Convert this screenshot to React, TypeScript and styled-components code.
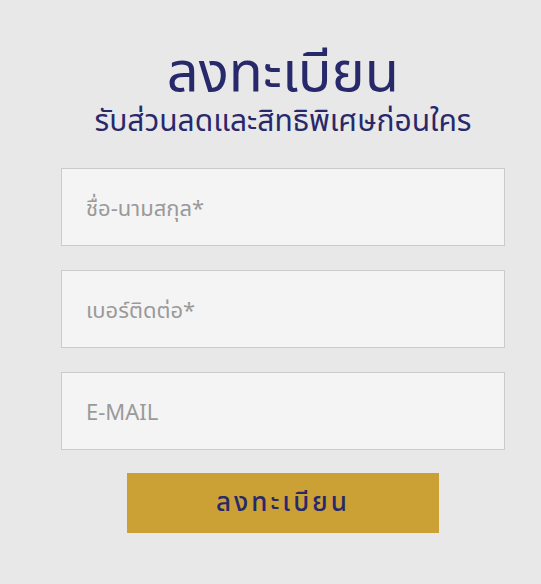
import { ReactElement } from 'react';
import styled, { createGlobalStyle } from 'styled-components';

const GlobalStyle = createGlobalStyle`
  html, body {
    margin: 0;
    padding: 0;
    background: #e8e8e8;
  }
  body {
    font-family: 'Noto Sans', 'Noto Sans Thai', 'Noto Sans Thai Looped', 'Loma', 'Garuda', sans-serif;
  }
`;

const Page = styled.div`
  width: 541px;
  min-height: 584px;
  box-sizing: border-box;
  padding: 38px 36px 0 61px;
  display: flex;
  flex-direction: column;
  align-items: center;
`;

const Heading = styled.h1`
  margin: 0;
  font-size: 56px;
  line-height: 62px;
  font-weight: 400;
  color: #28296a;
  text-align: center;
`;

const Subtitle = styled.p`
  margin: 2px 0 0;
  font-size: 30px;
  line-height: 36px;
  color: #28296a;
  text-align: center;
`;

const Form = styled.form`
  width: 444px;
  margin-top: 30px;
  display: flex;
  flex-direction: column;
  align-items: center;
  gap: 24px;
`;

const Field = styled.input`
  width: 100%;
  height: 78px;
  box-sizing: border-box;
  border: 1px solid #cbcbcb;
  background: #f4f4f4;
  padding: 0 24px;
  font-family: inherit;
  font-size: 22px;
  color: #333;
  outline: none;

  &::placeholder {
    color: #9a9a9a;
    opacity: 1;
  }
`;

const Submit = styled.button`
  width: 312px;
  height: 60px;
  margin-top: -1px;
  border: none;
  background: #cba135;
  color: #28296a;
  font-family: inherit;
  font-size: 26px;
  font-weight: 500;
  letter-spacing: 3px;
  cursor: pointer;
`;

export default function App(): ReactElement {
  return (
    <>
      <GlobalStyle />
      <Page>
        <Heading>ลงทะเบียน</Heading>
        <Subtitle>รับส่วนลดและสิทธิพิเศษก่อนใคร</Subtitle>
        <Form onSubmit={(e) => e.preventDefault()}>
          <Field type={'text'} placeholder={'ชื่อ-นามสกุล*'} />
          <Field type={'tel'} placeholder={'เบอร์ติดต่อ*'} />
          <Field type={'email'} placeholder={'E-MAIL'} />
          <Submit type={'submit'}>ลงทะเบียน</Submit>
        </Form>
      </Page>
    </>
  );
}
